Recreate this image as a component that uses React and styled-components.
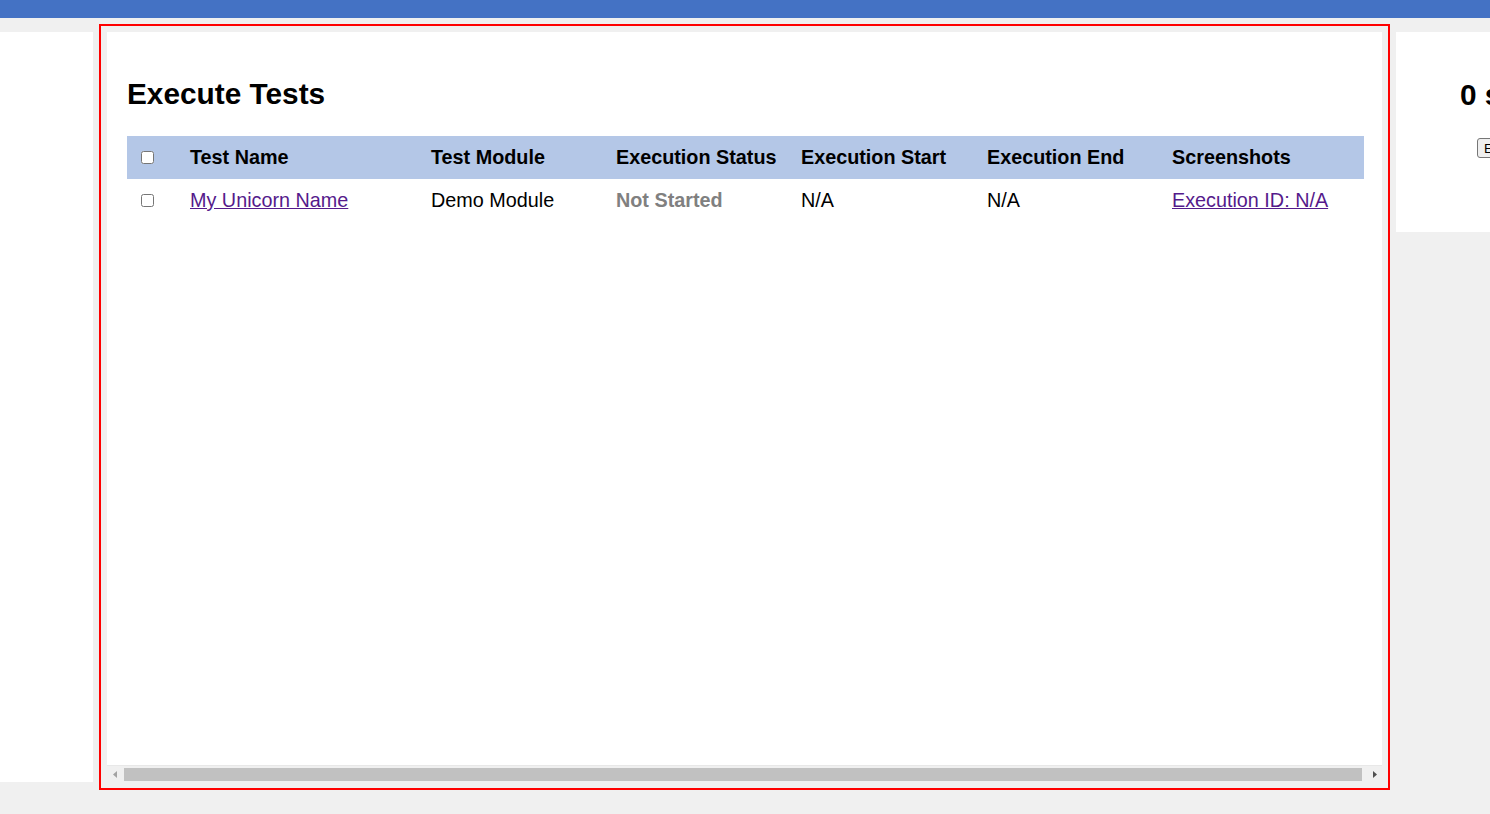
import React from "react";
import styled, { createGlobalStyle } from "styled-components";

const GlobalStyle = createGlobalStyle`
  html {
    overflow: hidden;
    background: #f0f0f0;
  }
  body {
    margin: 0;
    padding: 0;
    min-height: 100vh;
    background: #f0f0f0;
    font-family: "Liberation Sans", Arial, sans-serif;
    color: #000;
  }
`;

const TopBar = styled.header`
  height: 18px;
  background: #4472c4;
`;

const Main = styled.main`
  display: flex;
  align-items: flex-start;
  gap: 14px;
  padding-top: 14px;
  width: max-content;
`;

const SidePanel = styled.aside`
  width: 93px;
  height: 750px;
  background: #fff;
  flex-shrink: 0;
`;

const ContentPanel = styled.section`
  width: 1275px;
  height: 750px;
  flex-shrink: 0;
  background: #fff;
  display: flex;
  flex-direction: column;
  outline: 2px solid #ff0000;
  outline-offset: 6px;
`;

const ScrollArea = styled.div`
  flex: 1;
  overflow: hidden;
  padding: 45px 0 0 20px;
`;

const Title = styled.h2`
  margin: 0 0 26px;
  font-size: 29.8px;
  line-height: 33px;
  font-weight: 700;
  white-space: nowrap;
`;

const Table = styled.table`
  width: 1237px;
  border-collapse: collapse;
  table-layout: fixed;
  font-size: 19.8px;
`;

const HeadRow = styled.tr`
  height: 43px;
  background: #b4c7e7;
`;

const BodyRow = styled.tr`
  height: 43px;
`;

const Th = styled.th`
  text-align: left;
  font-weight: 700;
  padding: 0 0 0 ${(p) => (p.$check ? 14 : 10)}px;
  white-space: nowrap;
  vertical-align: middle;
`;

const Td = styled.td`
  text-align: left;
  padding: 0 0 0 ${(p) => (p.$check ? 14 : 10)}px;
  white-space: nowrap;
  vertical-align: middle;
`;

const Check = styled.input.attrs({ type: "checkbox" })`
  width: 13px;
  height: 13px;
  margin: 0;
  display: block;
`;

const Link = styled.a`
  color: #551a8b;
  text-decoration: underline;
`;

const Status = styled.span`
  color: #808080;
  font-weight: 700;
`;

const ScrollBar = styled.div`
  height: 17px;
  background: #f0f0f0;
  border-top: 1px solid #e8e8e8;
  box-sizing: border-box;
  display: flex;
  align-items: center;
  flex-shrink: 0;
`;

const ArrowButton = styled.div`
  width: 15px;
  height: 16px;
  display: flex;
  align-items: center;
  justify-content: center;
  flex-shrink: 0;
  svg {
    display: block;
  }
`;

const Track = styled.div`
  flex: 1;
  height: 16px;
  display: flex;
  align-items: center;
  padding: 0 5px 0 2px;
`;

const Thumb = styled.div`
  flex: 1;
  height: 13px;
  background: #c1c1c1;
`;

const ActionPanel = styled.aside`
  width: 320px;
  height: 200px;
  flex-shrink: 0;
  background: #fff;
  box-sizing: border-box;
  padding: 46px 0 0 64px;
  display: flex;
  flex-direction: column;
  align-items: flex-start;
`;

const ActionTitle = styled(Title)`
  margin: 0 0 27px;
`;

const Button = styled.button`
  margin-left: 17px;
  height: 20px;
  padding: 0 6px;
  font-family: "Liberation Sans", Arial, sans-serif;
  font-size: 13.3px;
  background: #efefef;
  border: 1px solid #767676;
  border-radius: 3px;
  color: #000;
`;

const columns = [
  { key: "check", width: 53 },
  { key: "name", width: 241, label: "Test Name" },
  { key: "module", width: 185, label: "Test Module" },
  { key: "status", width: 185, label: "Execution Status" },
  { key: "start", width: 186, label: "Execution Start" },
  { key: "end", width: 185, label: "Execution End" },
  { key: "shots", width: 202, label: "Screenshots" },
];

export default function App() {
  return (
    <>
      <GlobalStyle />
      <TopBar />
      <Main>
        <SidePanel />
        <ContentPanel>
          <ScrollArea>
            <Title>Execute Tests</Title>
            <Table>
              <colgroup>
                {columns.map((c) => (
                  <col key={c.key} style={{ width: c.width }} />
                ))}
              </colgroup>
              <thead>
                <HeadRow>
                  <Th $check>
                    <Check />
                  </Th>
                  {columns.slice(1).map((c) => (
                    <Th key={c.key}>{c.label}</Th>
                  ))}
                </HeadRow>
              </thead>
              <tbody>
                <BodyRow>
                  <Td $check>
                    <Check />
                  </Td>
                  <Td>
                    <Link href="#">My Unicorn Name</Link>
                  </Td>
                  <Td>Demo Module</Td>
                  <Td>
                    <Status>Not Started</Status>
                  </Td>
                  <Td>N/A</Td>
                  <Td>N/A</Td>
                  <Td>
                    <Link href="#">Execution ID: N/A</Link>
                  </Td>
                </BodyRow>
              </tbody>
            </Table>
          </ScrollArea>
          <ScrollBar>
            <ArrowButton>
              <svg width="4" height="7" viewBox="0 0 4 7">
                <path d="M4 0 L0 3.5 L4 7 Z" fill="#a3a3a3" />
              </svg>
            </ArrowButton>
            <Track>
              <Thumb />
            </Track>
            <ArrowButton>
              <svg width="4" height="7" viewBox="0 0 4 7">
                <path d="M0 0 L4 3.5 L0 7 Z" fill="#505050" />
              </svg>
            </ArrowButton>
          </ScrollBar>
        </ContentPanel>
        <ActionPanel>
          <ActionTitle>0 selected</ActionTitle>
          <Button>Execute</Button>
        </ActionPanel>
      </Main>
    </>
  );
}
